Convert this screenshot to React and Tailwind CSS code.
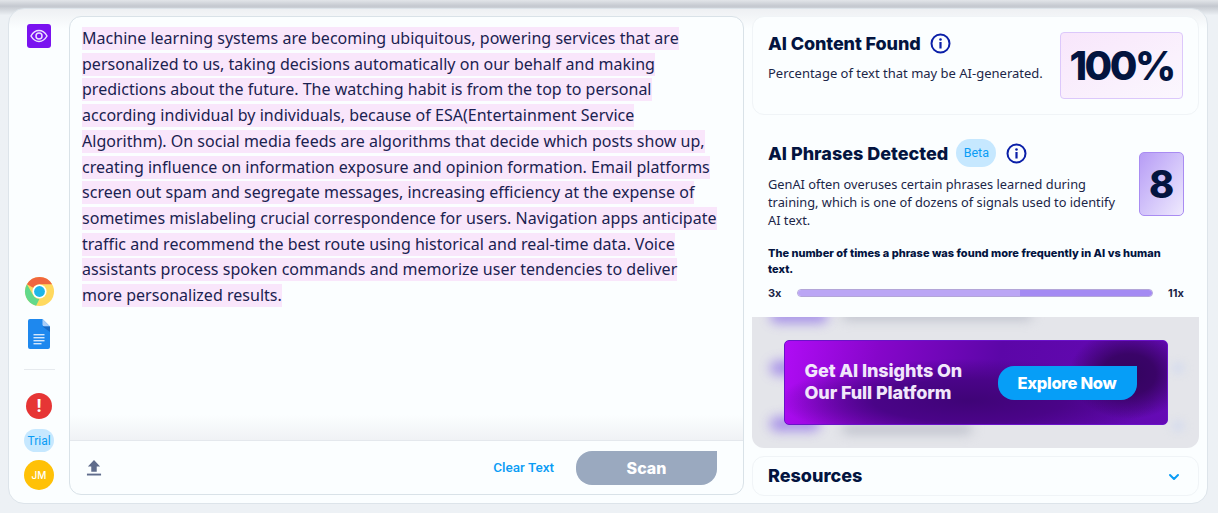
import React from "react";
import { ChevronDown } from "lucide-react";

const body =
  "Machine learning systems are becoming ubiquitous, powering services that are personalized to us, taking decisions automatically on our behalf and making predictions about the future. The watching habit is from the top to personal according individual by individuals, because of ESA(Entertainment Service Algorithm). On social media feeds are algorithms that decide which posts show up, creating influence on information exposure and opinion formation. Email platforms screen out spam and segregate messages, increasing efficiency at the expense of sometimes mislabeling crucial correspondence for users. Navigation apps anticipate traffic and recommend the best route using historical and real-time data. Voice assistants process spoken commands and memorize user tendencies to deliver more personalized results.";

function InfoIcon() {
  return (
    <svg width="21" height="21" viewBox="0 0 21 21" fill="none" className="shrink-0">
      <circle cx="10.5" cy="10.5" r="9" stroke="#0a1fa8" strokeWidth="2" />
      <circle cx="10.5" cy="6.5" r="1.3" fill="#0a1fa8" />
      <rect x="9.4" y="9" width="2.2" height="6.5" fill="#0a1fa8" />
    </svg>
  );
}

function ChromeIcon() {
  return (
    <svg width="31" height="31" viewBox="0 0 32 32">
      <circle cx="16" cy="16" r="15" fill="#ffd95f" />
      <path d="M16 1a15 15 0 0 1 13 7.500H16a7.500 7.500 0 0 0-6.500 3.750L3 8.500A15 15 0 0 1 16 1z" fill="#f0663f" />
      <path d="M3 8.500l6.500 11.250A7.500 7.500 0 0 0 16 23.500L12.500 30.600A15 15 0 0 1 3 8.500z" fill="#62d98b" />
      <circle cx="16" cy="16" r="7.300" fill="#fff" />
      <circle cx="16" cy="16" r="5.600" fill="#1fb6e8" />
    </svg>
  );
}

function DocsIcon() {
  return (
    <svg width="22" height="30" viewBox="0 0 22 30">
      <path d="M2 0h12.500L22 7.500V28a2 2 0 0 1-2 2H2a2 2 0 0 1-2-2V2a2 2 0 0 1 2-2z" fill="#1e88ee" />
      <path d="M14.500 0L22 7.500h-5.500a2 2 0 0 1-2-2z" fill="#a9cdf8" />
      <path d="M14.500 7.500H22V13z" fill="#1769c4" />
      <rect x="5.500" y="15" width="11" height="1.400" fill="#d5e8fc" />
      <rect x="5.500" y="18" width="11" height="1.400" fill="#d5e8fc" />
      <rect x="5.500" y="21" width="11" height="1.400" fill="#d5e8fc" />
      <rect x="5.500" y="24" width="8" height="1.400" fill="#d5e8fc" />
    </svg>
  );
}

function Sidebar() {
  return (
    <div className="w-[60px] shrink-0 flex flex-col items-center pt-[8px] pb-[5px]">
      <div className="w-6 h-6 rounded-[3px] bg-[#7a12f0] flex items-center justify-center">
        <svg width="18" height="14" viewBox="0 0 18 14" fill="none">
          <path d="M1 7c2-3.600 4.800-5.400 8-5.400S15 3.400 17 7c-2 3.600-4.800 5.400-8 5.400S3 10.600 1 7z" stroke="#ece0ff" strokeWidth="1.5" />
          <circle cx="9" cy="7" r="3" stroke="#ece0ff" strokeWidth="1.5" />
        </svg>
      </div>
      <div className="mt-auto flex flex-col items-center">
        <ChromeIcon />
        <div className="mt-[12px]">
          <DocsIcon />
        </div>
        <div className="w-[31px] h-px bg-[#e6eaee] mt-[20px]" />
        <div className="mt-[23px] w-[26px] h-[26px] rounded-full bg-[#e63535] flex items-center justify-center text-white text-[17px] font-bold font-['Inter',sans-serif] leading-none">
          !
        </div>
        <div className="mt-[10px] w-[30px] h-[23px] rounded-full bg-[#c6e8ff] flex items-center justify-center text-[12px] text-[#0a9cf5] font-['Roboto',sans-serif]">
          Trial
        </div>
        <div className="mt-[8px] w-[30px] h-[30px] rounded-full bg-[#ffc107] flex items-center justify-center text-[10px] text-white font-medium font-['Inter',sans-serif]">
          JM
        </div>
      </div>
    </div>
  );
}

function Editor() {
  return (
    <div className="w-[675px] shrink-0 flex flex-col rounded-[12px] border border-[#d9e2e8] bg-[#fbfeff] overflow-hidden">
      <div className="flex-1 pl-[12px] pr-[24px] pt-[9px] bg-gradient-to-b from-transparent from-[94%] to-[#f0f2f5]">
        <p className="text-[16px] leading-[25.7px] tracking-[0.02px] text-[#1b2250] font-['Noto_Sans',sans-serif]">
          <span className="bg-[#f9e6fb] pb-px">{body}</span>
        </p>
      </div>
      <div className="h-[54px] shrink-0 border-t border-[#e4e8ed] flex items-center pl-[16px] pr-[26px]">
        <svg width="16" height="17" viewBox="0 0 17 18">
          <path d="M8.500 1L15 8h-3.600v5.500H5.600V8H2z" fill="#5f6c8c" />
          <rect x="1" y="15.500" width="15" height="2" fill="#5f6c8c" />
        </svg>
        <span className="ml-auto text-[13.5px] text-[#0a9cf5] font-['Roboto',sans-serif] font-medium">Clear Text</span>
        <div className="ml-[22px] w-[141px] h-[34px] bg-[#9aa9bf] rounded-[16px] rounded-tr-none flex items-center justify-center text-white text-[16px] font-extrabold font-['Inter',sans-serif]">
          Scan
        </div>
      </div>
    </div>
  );
}

function ContentCard() {
  return (
    <div className="h-[99px] shrink-0 rounded-[12px] border border-[#f0f4f7] bg-[#fbfeff] pl-[15px] pr-[15px] pt-[15px] flex justify-between">
      <div>
        <div className="flex items-center gap-[9px] h-[24px] -mt-px">
          <h2 className="text-[18px] font-extrabold text-[#03143f] font-['Inter',sans-serif] tracking-[-0.1px]">AI Content Found</h2>
          <InfoIcon />
        </div>
        <p className="mt-[9px] text-[13px] text-[#1c2648] font-['Noto_Sans',sans-serif]">
          Percentage of text that may be AI-generated.
        </p>
      </div>
      <div className="w-[123px] h-[67px] rounded-[4px] border border-[#dcc8fb] bg-gradient-to-br from-[#f8e6fb] to-[#fbf7fe] flex items-center justify-center text-[40px] font-extrabold text-[#03143f] font-['Inter',sans-serif] tracking-[-2.5px]">
        100%
      </div>
    </div>
  );
}

function PhrasesCard() {
  return (
    <div className="h-[194px] shrink-0 bg-[#fbfeff] rounded-t-[12px] pl-[16px] pr-[15px] pt-[16px]">
      <div className="flex justify-between">
        <div className="w-[350px]">
          <div className="flex items-center h-[28px]">
            <h2 className="text-[18px] font-extrabold text-[#03143f] font-['Inter',sans-serif]">AI Phrases Detected</h2>
            <span className="ml-[8px] w-[40px] h-[28px] rounded-full bg-[#c6e8ff] flex items-center justify-center text-[12.5px] text-[#0a9cf5] font-['Roboto',sans-serif]">
              Beta
            </span>
            <span className="ml-[10px]">
              <InfoIcon />
            </span>
          </div>
          <p className="mt-[8px] text-[12.8px] leading-[18px] text-[#1c2648] font-['Noto_Sans',sans-serif]">
            GenAI often overuses certain phrases learned during training, which is one of dozens of signals used to identify AI text.
          </p>
        </div>
        <div className="mt-[13px] w-[45px] h-[64px] rounded-[5px] border border-[#a98cf2] bg-gradient-to-br from-[#b79cf5] to-[#efeafd] flex items-center justify-center text-[38px] font-extrabold text-[#03143f] font-['Inter',sans-serif]">
          8
        </div>
      </div>
      <p className="mt-[16px] text-[11px] leading-[16px] font-extrabold text-[#03143f] font-['Inter',sans-serif]">
        The number of times a phrase was found more frequently in AI vs human text.
      </p>
      <div className="mt-[8px] flex items-center justify-between text-[11px] font-bold text-[#1c2648] font-['Inter',sans-serif]">
        <span>3x</span>
        <div className="w-[356px] h-[8px] rounded-full overflow-hidden flex border border-[#b3a6d8]">
          <div className="w-[222px] bg-[#bba6f5]" />
          <div className="flex-1 bg-[#a48af3]" />
        </div>
        <span>11x</span>
      </div>
    </div>
  );
}

function PromoCard() {
  return (
    <div className="relative h-[131px] shrink-0 bg-[#e4e5ea] rounded-b-[12px] overflow-hidden flex items-center justify-center">
      {/* blurred rows behind the promo */}
      <div className="absolute left-[18px] top-[-8px] w-[58px] h-[14px] rounded-full bg-[#8b6be8] blur-[6px] opacity-70" />
      <div className="absolute left-[18px] top-[44px] w-[50px] h-[14px] rounded-full bg-[#8b6be8] blur-[6px] opacity-70" />
      <div className="absolute left-[18px] top-[100px] w-[50px] h-[14px] rounded-full bg-[#8b6be8] blur-[6px] opacity-70" />
      <div className="absolute left-[90px] top-[108px] w-[130px] h-[8px] rounded-full bg-[#b5b8c4] blur-[6px]" />
      <div className="absolute left-[90px] top-[-6px] w-[190px] h-[8px] rounded-full bg-[#b5b8c4] blur-[6px]" />
      <div className="absolute left-[420px] top-[46px] w-[12px] h-[10px] rounded-full bg-[#d3daee] blur-[4px]" />
      <div className="absolute left-[420px] top-[104px] w-[12px] h-[10px] rounded-full bg-[#d3daee] blur-[4px]" />
      <div className="relative w-[384px] h-[85px] rounded-[5px] border border-[#6a12c8] bg-[radial-gradient(ellipse_60px_45px_at_90%_40%,#33045f_0%,#3a0468_45%,transparent_100%),radial-gradient(ellipse_190px_42px_at_48%_72%,#3f0477_0%,#4a0488_50%,transparent_100%),linear-gradient(100deg,#b00cf5_0%,#8606ca_24%,#5c06a8_55%,#650ab5_100%)] flex items-center pl-[20px] pr-[30px] justify-between">
        <div className="mb-[2px] text-[18px] leading-[22px] font-extrabold text-[#f1e7fb] font-['Inter',sans-serif] tracking-[-0.1px]">
          Get AI Insights On
          <br />
          Our Full Platform
        </div>
        <div className="mt-[1px] w-[139px] h-[34px] bg-[#069ef7] rounded-[16px] rounded-tr-none flex items-center justify-center text-white text-[16.5px] font-extrabold font-['Inter',sans-serif] tracking-[-0.3px]">
          Explore Now
        </div>
      </div>
    </div>
  );
}

export default function App() {
  return (
    <div className="w-[1218px] h-[513px] overflow-hidden font-['Inter',sans-serif] bg-gradient-to-b from-[#e2e5e9] from-0% via-[#c4c8cf] via-[1.2%] to-[#edf1f5] to-[3%] pt-[8px] pl-[8px]">
      <div className="w-[1200px] h-[496px] flex rounded-[16px] border border-[#dde4ea] bg-gradient-to-b from-[#eef0f3] to-[#fbfeff] to-[4%] pt-[7px] pb-[8px]">
        <Sidebar />
        <Editor />
        <div className="ml-[8px] w-[447px] shrink-0 flex flex-col">
          <ContentCard />
          <div className="h-[8px] shrink-0" />
          <PhrasesCard />
          <PromoCard />
          <div className="mt-[8px] h-[40px] shrink-0 rounded-[12px] border border-[#f0f4f7] flex items-center justify-between pl-[15px] pr-[16px] pb-[2px]">
            <span className="text-[18px] font-extrabold text-[#03143f] font-['Inter',sans-serif]">Resources</span>
            <ChevronDown size={16} strokeWidth={3} className="text-[#0a9cf5] mt-[3px]" />
          </div>
        </div>
      </div>
    </div>
  );
}
